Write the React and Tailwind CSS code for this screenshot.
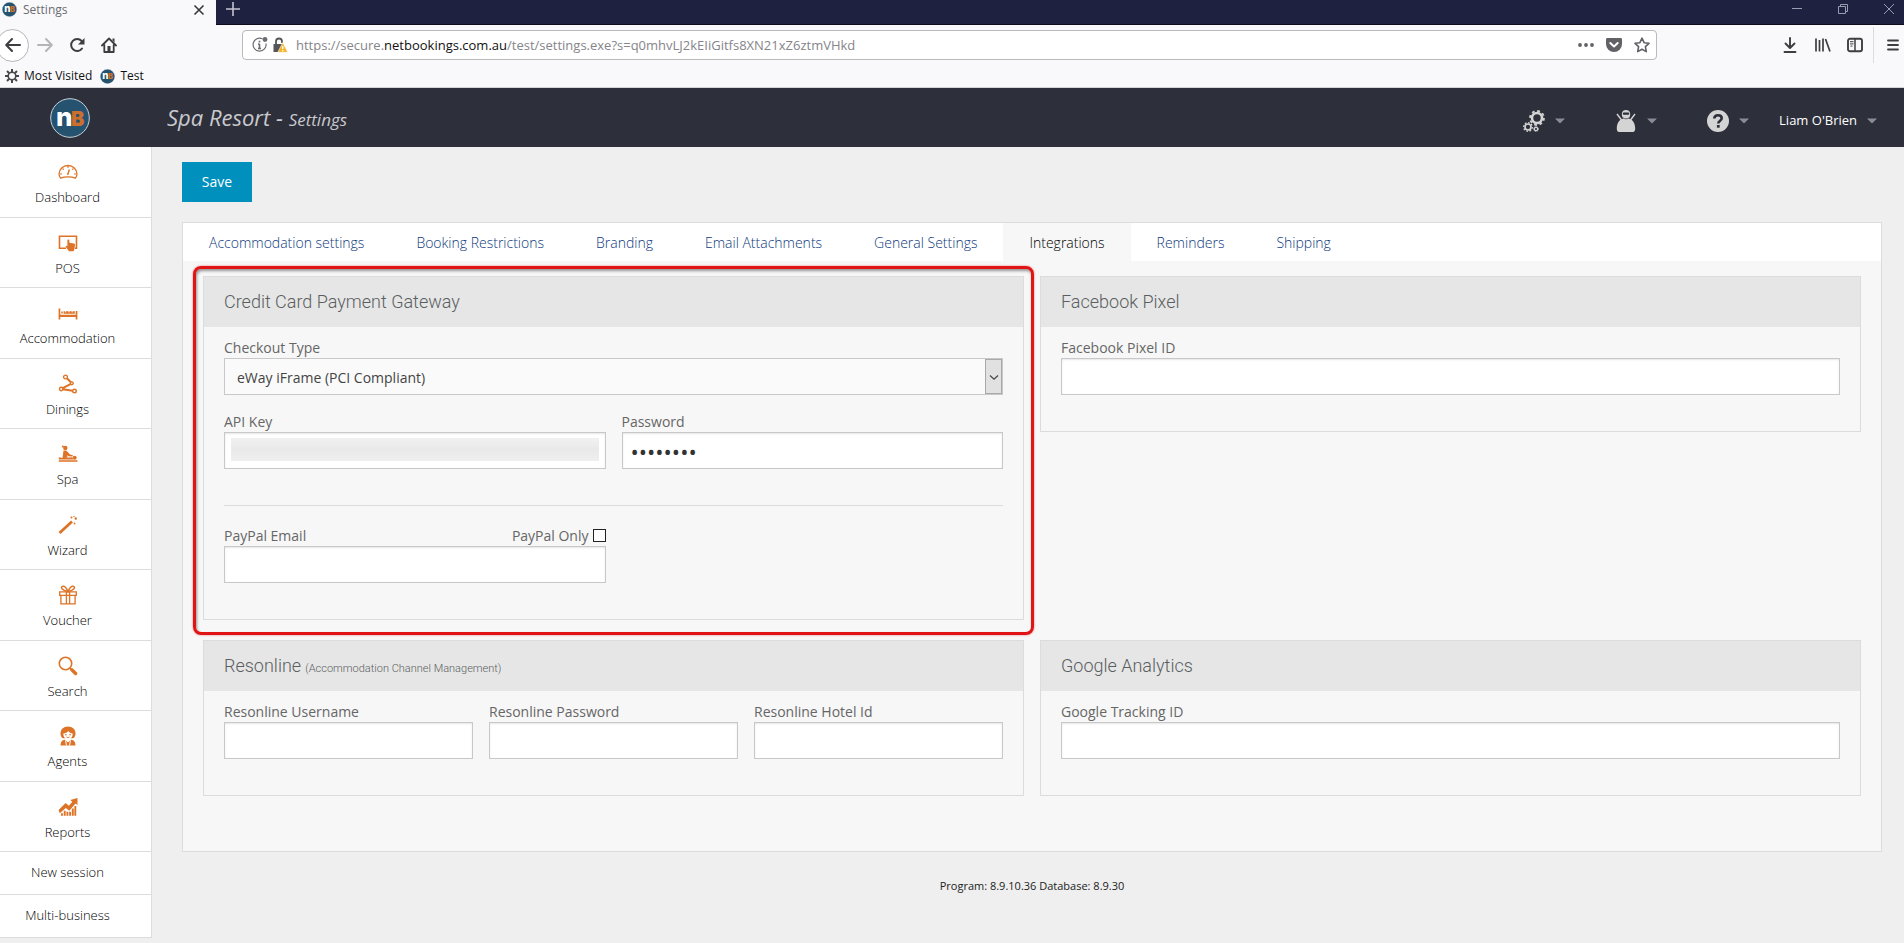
const TABS = [
  'Accommodation settings',
  'Booking Restrictions',
  'Branding',
  'Email Attachments',
  'General Settings',
  'Integrations',
  'Reminders',
  'Shipping',
];

function Svg({ children, size = 'size-5', box = '0 0 20 20', className = '' }) {
  return (
    <svg viewBox={box} fill="none" stroke="currentColor" className={`${size} shrink-0 ${className}`} aria-hidden="true">
      {children}
    </svg>
  );
}

function Logo({ size }) {
  return (
    <svg viewBox="0 0 40 40" className={`${size} shrink-0`} aria-hidden="true">
      <circle cx="20" cy="20" r="19.3" fill="#24526f" stroke="#c9d3da" strokeWidth="1" />
      <text x="6" y="27.500" fontSize="26" fontWeight="800" fontFamily="Inter, sans-serif" fill="#fff">n</text>
      <text x="21" y="27.500" fontSize="20" fontWeight="900" fontFamily="Inter, sans-serif" fill="#cc6f2c">B</text>
    </svg>
  );
}

/* Sidebar icons */
const DashboardIcon = () => (
  <Svg>
    <path strokeWidth="1.300" d="M2.600 16.200C1.500 14.800 1 13.400 1 12a9 8.500 0 0 1 18 0c0 1.400-.5 2.800-1.600 4.200-2.300-1-4.500-1.300-7.400-1.300s-5.100.3-7.400 1.300z" />
    <path strokeWidth="1.100" d="M10 4v2M4.500 6.500l1.300 1.200M15.500 6.500l-1.300 1.200M2 12h2M16 12h2" />
    <path strokeWidth="1.500" d="M9.600 13l1.700-5.500" />
  </Svg>
);

const PosIcon = () => (
  <Svg>
    <path strokeWidth="1.600" d="M8 15.300H1.500V3.300h17v12h-1.500" />
    <path fill="currentColor" stroke="none" d="M10.200 6.500c.9 0 1.200.6 1.200 1.300v2l4.500.8c.8.2 1.200.7 1.100 1.500l-.6 4.200-.8 2h-4.700l-3-4.300c-.5-.9.4-1.600 1.200-1l.3.200V7.800c0-.7.200-1.300.8-1.300z" />
  </Svg>
);

const BedIcon = () => (
  <Svg>
    <path fill="currentColor" stroke="none" d="M.6 5.500h1.700v6.200h15.400V8h1.700v8.500h-1.700V14H2.300v2.500H.6zM3.300 8.600h1.500v2H3.300zM5.600 8.300h11.200v2.400H5.600z" />
    <path stroke="#fff" strokeWidth=".8" d="M7.500 8v1.500M11 8v1.500M14.200 8v1.500" />
  </Svg>
);

const DiningIcon = () => (
  <Svg>
    <g strokeWidth="1.400">
      <circle cx="7.500" cy="3" r="1.900" />
      <circle cx="3.200" cy="15" r="1.700" />
      <circle cx="16.500" cy="17" r="1.800" />
      <circle cx="13.800" cy="9.300" r="1.400" />
      <path strokeWidth="2" d="M8.900 4.300l4 3.900M12.500 10.100l-7.800 4M5 15.300l9.600 1.500" />
    </g>
  </Svg>
);

const SpaIcon = () => (
  <Svg>
    <g fill="currentColor" stroke="none">
      <circle cx="7.300" cy="4" r="2.200" />
      <circle cx="4.900" cy="2.500" r="1" />
      <path d="M5.500 6.500l3 .2 3.500 3.800 3 .8-.6 1.300-4-.4L8.800 11l1 2.500-5.300.8z" />
      <circle cx="16.700" cy="13.700" r="2" />
      <path d="M.8 13.200l4 .9 9.500-.9 1.200 2.300H.8zM.8 16.200h18.700v1.600H.8z" />
    </g>
  </Svg>
);

const WandIcon = () => (
  <Svg>
    <path strokeWidth="2.800" d="M1.500 18L14 6.500" />
    <g fill="currentColor" stroke="none">
      <circle cx="13.500" cy="2.500" r="1" />
      <circle cx="17.800" cy="3.500" r="1.200" />
      <circle cx="16.500" cy="8.500" r=".9" />
      <circle cx="16" cy="1.400" r=".7" />
    </g>
  </Svg>
);

const GiftIcon = () => (
  <Svg>
    <path strokeWidth="1.300" d="M1.700 6.800h16.600v3.500H1.700zM2.900 10.300h14.200v8.500H2.900zM8.400 6.800v12M11.600 6.800v12" />
    <path strokeWidth="1.400" d="M10 6.600C8.500 3 6.500.8 4.500 1.400 2.300 2.200 3.500 5 10 6.600zM10 6.600c1.500-3.600 3.500-5.800 5.500-5.200 2.200.8 1 3.600-5.500 5.200z" />
  </Svg>
);

const SearchIcon = () => (
  <Svg>
    <circle cx="7.500" cy="7.500" r="6.200" strokeWidth="1.600" />
    <path strokeWidth="3.400" strokeLinecap="round" d="M13.800 13.800l3.800 3.700" />
    <path strokeWidth="1.500" d="M12 12l2 2" />
  </Svg>
);

const AgentIcon = () => (
  <Svg>
    <g fill="currentColor" stroke="none">
      <path d="M10 .5c4.600 0 7.500 3 7.500 7 0 2-.8 3.800-2.200 4.800H4.700C3.300 11.300 2.500 9.500 2.500 7.500c0-4 2.900-7 7.500-7z" />
      <path d="M2.500 19.500c0-3.500 1.300-5.500 4.500-5.800l3 2.800 3-2.800c3.200.3 4.500 2.300 4.500 5.800z" />
    </g>
    <path fill="#fff" stroke="none" d="M5.300 7.500c3-.2 4.200-1.300 5-2.500 1 1.500 2.400 2.300 4.400 2.500-.1 3.500-2 6-4.700 6s-4.600-2.500-4.700-6z" />
    <path strokeWidth="1" d="M7 8.800h1.800M11.200 8.800H13M8.500 11c1 .7 2 .7 3 0" />
    <path stroke="#fff" strokeWidth="1" d="M7.500 14.500l1 5M12.500 14.500l-1 5" />
  </Svg>
);

const ReportIcon = () => (
  <Svg>
    <path fill="currentColor" stroke="none" d="M.6 13l7-7 3.300 2.800 3.400-4-2-1.800L19.500 1v7l-2-1.500-6.200 7.200-3.500-2.800-6 5.300z" />
    <path strokeWidth="1.900" d="M4 18.800v-2.500M6.700 18.800v-5M9.400 18.800v-4M12.100 18.800v-4M14.800 18.800V11.500M17.300 18.800V9" />
  </Svg>
);

const MENU = [
  { label: 'Dashboard', Icon: DashboardIcon },
  { label: 'POS', Icon: PosIcon },
  { label: 'Accommodation', Icon: BedIcon },
  { label: 'Dinings', Icon: DiningIcon },
  { label: 'Spa', Icon: SpaIcon },
  { label: 'Wizard', Icon: WandIcon },
  { label: 'Voucher', Icon: GiftIcon },
  { label: 'Search', Icon: SearchIcon },
  { label: 'Agents', Icon: AgentIcon },
  { label: 'Reports', Icon: ReportIcon },
];

function TitleBar() {
  return (
    <div className="flex h-[25px] bg-[#1f2140]">
      <div className="flex w-[216px] items-center bg-[#f9f9fb] pr-[11px] pb-[6px] pl-[2px]">
        <Logo size="size-[15px]" />
        <span className="ml-[6px] flex-1 text-xs text-[#6b6b70]">Settings</span>
        <button aria-label="Close tab" className="text-[#38383d]">
          <Svg size="size-3" box="0 0 12 12">
            <path strokeWidth="1.600" d="M1.500 1.500l9 9M10.500 1.500l-9 9" />
          </Svg>
        </button>
      </div>
      <div className="flex flex-1 items-center justify-between border-b border-[#0c0c1c] pr-[10px] pb-[7px] pl-[10px]">
        <button aria-label="New tab" className="text-[#c4c4d0]">
          <Svg size="size-3.5" box="0 0 14 14">
            <path strokeWidth="1.600" d="M7 0v14M0 7h14" />
          </Svg>
        </button>
        <div className="flex items-center gap-9 text-[#9a9ab0]">
          <button aria-label="Minimize">
            <Svg size="size-2.5" box="0 0 10 10">
              <path d="M0 4.500h10" />
            </Svg>
          </button>
          <button aria-label="Restore">
            <Svg size="size-2.5" box="0 0 10 10">
              <path d="M.5 2.500h7v7h-7zM2.500 2.500v-2h7v7h-2" />
            </Svg>
          </button>
          <button aria-label="Close window">
            <Svg size="size-2.5" box="0 0 10 10">
              <path d="M0 0l10 10M10 0L0 10" />
            </Svg>
          </button>
        </div>
      </div>
    </div>
  );
}

function Toolbar() {
  return (
    <div className="flex h-10 items-center bg-[#f9f9fb] pr-[5px] text-[#3e3e42]">
      <button aria-label="Back" className="-ml-1 flex size-[33px] items-center justify-center rounded-full border border-[#b5b5ba] bg-white">
        <Svg size="size-4" box="0 0 16 16">
          <path strokeWidth="2" strokeLinecap="round" strokeLinejoin="round" d="M15 8H1.500M7 2L1.200 8 7 14" />
        </Svg>
      </button>
      <div className="ml-2 flex items-center gap-4">
        <button aria-label="Forward" className="text-[#b5b5b9]">
          <Svg size="size-4" box="0 0 16 16">
            <path strokeWidth="2" strokeLinecap="round" strokeLinejoin="round" d="M1 8h13.500M9 2l5.800 6L9 14" />
          </Svg>
        </button>
        <button aria-label="Reload">
          <Svg size="size-4" box="0 0 16 16">
            <path strokeWidth="2" strokeLinecap="round" d="M13 11.500A6 6 0 1 1 12.600 4" />
            <path fill="currentColor" stroke="none" d="M15.500 1v6.500H9z" />
          </Svg>
        </button>
        <button aria-label="Home">
          <Svg size="size-4" box="0 0 16 16">
            <path strokeWidth="1.800" strokeLinejoin="round" strokeLinecap="round" d="M1 8.500L8 1.500l7 7M3.300 8v7h9.400V8" />
            <path fill="currentColor" stroke="none" d="M6.500 9h3v6h-3zM11.500 1.500h2v4l-2-2z" />
          </Svg>
        </button>
      </div>

      <div className="ml-[125px] flex h-[30px] flex-1 items-center rounded-sm border border-[#b9b9be] bg-white pr-[6px] pl-[9px]">
        <Svg size="size-4" box="0 0 16 16" className="text-[#6c6c70]">
          <path strokeWidth="1.200" d="M10.500 1.800A6.500 6.500 0 1 0 14 6.500" />
          <path strokeWidth="1.600" d="M7.500 7v4.500M6 11.500h3M6 7h1.500M7.500 3.800v1.700" />
          <circle cx="13" cy="2.500" r="2.400" fill="currentColor" stroke="none" />
        </Svg>
        <Svg size="size-4" box="0 0 16 16" className="ml-1 text-[#55555a]">
          <path strokeWidth="1.800" d="M4 8V4.500a3 3 0 0 1 6 0V6" />
          <path fill="currentColor" stroke="none" d="M1.500 7h9v8h-9z" />
          <path fill="#f3b229" stroke="#fff" strokeWidth=".6" d="M10.800 5.500l5 9.800H5.800z" />
          <path stroke="#fff" strokeWidth="1.300" d="M10.800 9v3M10.800 13v1.300" />
        </Svg>
        <span className="ml-2 flex-1 pt-0.5 text-[13px] text-[#85858a]">
          https://secure.<span className="text-[#111]">netbookings.com.au</span>/test/settings.exe?s=q0mhvLJ2kEIiGitfs8XN21xZ6ztmVHkd
        </span>
        <div className="flex items-center gap-3 text-[#626266]">
          <button aria-label="Page actions">
            <Svg size="size-4" box="0 0 16 16">
              <g fill="currentColor" stroke="none">
                <circle cx="2" cy="8" r="1.900" />
                <circle cx="8" cy="8" r="1.900" />
                <circle cx="14" cy="8" r="1.900" />
              </g>
            </Svg>
          </button>
          <button aria-label="Save to Pocket">
            <Svg size="size-4" box="0 0 16 16">
              <path fill="currentColor" stroke="none" d="M1.500 1h13c1 0 1.500.5 1.500 1.500V7a8 8 0 0 1-16 0V2.500C0 1.500.5 1 1.500 1z" />
              <path stroke="#fff" strokeWidth="2" strokeLinecap="round" strokeLinejoin="round" d="M4.300 6L8 9.500 11.700 6" />
            </Svg>
          </button>
          <button aria-label="Bookmark this page">
            <Svg size="size-4" box="0 0 16 16">
              <path strokeWidth="1.600" strokeLinejoin="round" d="M8 1.200l2.100 4.500 4.900.6-3.600 3.400.9 4.900L8 12.200l-4.300 2.400.9-4.900L1 6.300l4.900-.6z" />
            </Svg>
          </button>
        </div>
      </div>

      <div className="ml-[126px] flex items-center gap-4">
        <button aria-label="Downloads">
          <Svg size="size-4" box="0 0 16 16">
            <path strokeWidth="1.900" strokeLinecap="round" strokeLinejoin="round" d="M7 1v9.500M2.500 6.500L7 11l4.500-4.500M1.500 15h11" />
          </Svg>
        </button>
        <button aria-label="Library">
          <Svg size="size-4" box="0 0 16 16">
            <path strokeWidth="1.700" d="M1 1.500v13M4.500 3v11.500M8 1.500v13M10.500 2l4.500 12.500" />
          </Svg>
        </button>
        <button aria-label="Sidebars">
          <Svg size="size-4" box="0 0 16 16">
            <rect x="1" y="1.800" width="14" height="12.400" rx="2" strokeWidth="1.900" />
            <path strokeWidth="1.500" d="M8 2v12" />
            <path strokeWidth="1" d="M3 4.700h3.500M3 6.900h3.500M3.500 9.100h2" />
          </Svg>
        </button>
      </div>
      <div className="mr-[13px] ml-[10px] h-9 w-px bg-[#dcdce0]" />
      <button aria-label="Menu">
        <Svg size="size-3" box="0 0 12 12">
          <path strokeWidth="1.800" strokeLinecap="round" d="M1 1.500h10M1 6h10M1 10.500h10" />
        </Svg>
      </button>
    </div>
  );
}

function Bookmarks() {
  return (
    <div className="flex h-[23px] items-center border-b border-[#d5d5d8] bg-[#f9f9fb] pl-[5px] text-xs text-[#111]">
      <a href="#most-visited" className="flex items-center gap-[5px]">
        <Svg size="size-3.5" box="0 0 14 14" className="text-[#48484c]">
          <circle cx="7" cy="7" r="3.800" strokeWidth="1.600" />
          <path strokeWidth="2" d="M7 0v3M7 11v3M0 7h3M11 7h3M2 2l2.200 2.200M9.800 9.800L12 12M12 2L9.800 4.200M4.200 9.800L2 12" />
        </Svg>
        Most Visited
      </a>
      <a href="#test" className="ml-2 flex items-center gap-[5px]">
        <Logo size="size-[15px]" />
        Test
      </a>
    </div>
  );
}

function Caret() {
  return (
    <svg viewBox="0 0 10 6" className="h-1.5 w-2.5" fill="#8a8b94" aria-hidden="true">
      <path d="M0 .5h10L5 5.500z" />
    </svg>
  );
}

function Header() {
  return (
    <header className="flex h-[59px] items-center bg-[#2d2f3a] pr-[27px] pl-[50px]">
      <Logo size="size-10" />
      <h1 className="ml-[77px] flex-1 text-[22px] font-normal text-[#c9c9ce] italic">
        Spa Resort - <span className="text-[17px]">Settings</span>
      </h1>
      <div className="flex items-center gap-[50px] pt-1.5 text-[#d4d4d4]">
        <button aria-label="Settings" className="flex items-center gap-2.5">
          <Svg size="size-[22px]" box="0 0 22 22">
            <circle cx="14" cy="8" r="5" strokeWidth="2.600" />
            <circle cx="14" cy="8" r="7" strokeWidth="1.800" strokeDasharray="2.800 2.700" />
            <circle cx="5" cy="17" r="3" strokeWidth="1.700" />
            <circle cx="5" cy="17" r="4.300" strokeWidth="1.300" strokeDasharray="1.700 1.600" />
            <circle cx="13" cy="19" r="1.700" strokeWidth="1.200" />
            <circle cx="13" cy="19" r="2.500" strokeWidth=".8" strokeDasharray="1.100 .9" />
          </Svg>
          <Caret />
        </button>
        <button aria-label="Agents" className="flex items-center gap-2.5">
          <Svg size="size-[22px]" box="0 0 22 22">
            <path fill="currentColor" stroke="none" d="M6.800 4C6.800 1.300 8.500 0 11 0s4.200 1.300 4.200 4c0 2-.7 3.500-1.700 4.500 4.500 1 6.700 5 6.700 10 0 2-.8 3.500-2.200 3.500H4c-1.400 0-2.200-1.500-2.200-3.500 0-5 2.200-9 6.700-10C7.500 7.500 6.800 6 6.800 4z" />
            <path strokeWidth="1.400" d="M2 4l4.500 6M20 4l-4.500 6" />
            <rect x="7.800" y="2.600" width="6.400" height="2.200" rx="1" fill="#2d2f3a" stroke="none" />
            <path stroke="#2d2f3a" strokeWidth=".7" d="M8 7.800c2 1.400 4 1.400 6 0" />
          </Svg>
          <Caret />
        </button>
        <button aria-label="Help" className="flex items-center gap-2.5">
          <Svg size="size-[22px]" box="0 0 22 22">
            <circle cx="11" cy="11" r="11" fill="currentColor" stroke="none" />
            <path stroke="#2d2f3a" strokeWidth="2.600" d="M7.300 8.500C7.400 6.200 9 5.200 11 5.200c2.200 0 3.700 1.100 3.700 3 0 2.500-3.400 2.500-3.400 5.300" />
            <path stroke="#2d2f3a" strokeWidth="2.800" d="M11.300 15v2.700" />
          </Svg>
          <Caret />
        </button>
      </div>
      <button className="ml-[30px] flex items-center gap-2.5 pt-1.5 text-[13px] text-white">
        Liam O'Brien
        <Caret />
      </button>
    </header>
  );
}

function Sidebar() {
  return (
    <nav className="w-[152px] shrink-0 self-start border-r border-[#dcdcdc] bg-white text-[13px] font-light text-black">
      {MENU.map(({ label, Icon }) => (
        <a
          key={label}
          href={`#${label.toLowerCase()}`}
          className="flex flex-col items-center border-b border-[#dcdcdc] pt-[15px] pr-4 odd:h-[71px] even:h-[70px]"
        >
          <span className="text-[#dd7326]">
            <Icon />
          </span>
          <span className="mt-[5px] leading-5">{label}</span>
        </a>
      ))}
      {['New session', 'Multi-business'].map((label) => (
        <a key={label} href="#session" className="flex h-[43px] items-center justify-center border-b border-[#dcdcdc] pr-4">
          {label}
        </a>
      ))}
    </nav>
  );
}

function Panel({ title, note, highlighted, children }) {
  return (
    <section className="relative border border-[#dcdcdc]">
      <h2 className="flex h-[50px] items-center bg-[#e6e6e6] px-5 font-[Roboto,sans-serif] text-lg font-light text-[#5a5e61]">
        <span>
          {title}
          {note && <small className="ml-1 text-[11px]">{note}</small>}
        </span>
      </h2>
      <div className="px-5 pt-[11px] pb-[19px]">{children}</div>
      {highlighted && (
        <div className="pointer-events-none absolute -inset-x-[11px] -top-[11px] -bottom-4 rounded-lg border-3 border-[#e01414] shadow-[0_0_2px_#e01414aa,inset_1px_2px_3px_#00000066]" />
      )}
    </section>
  );
}

const inputClass = 'block h-[37px] w-full border border-[#c8c8c8] bg-white px-2 text-[#333] shadow-[inset_0_1px_2px_#0000001a] outline-none';

function Field({ id, label, children }) {
  return (
    <div className="mb-[17px]">
      <label htmlFor={id} className="block leading-5">{label}</label>
      {children || <input id={id} type="text" className={inputClass} />}
    </div>
  );
}

function PaymentGateway() {
  return (
    <Panel title="Credit Card Payment Gateway" highlighted>
      <Field id="checkout" label="Checkout Type">
        <div className="relative">
          <select id="checkout" className="block h-[37px] w-full appearance-none border border-[#c8c8c8] bg-[#fafafa] px-3 pt-0.5 text-[#444]">
            <option>eWay iFrame (PCI Compliant)</option>
          </select>
          <span className="pointer-events-none absolute inset-y-px right-px flex w-[17px] items-center justify-center border border-[#a9a9a9] bg-[#e1e1e1] text-[#444]">
            <Svg size="size-2.5" box="0 0 10 10">
              <path strokeWidth="1.200" d="M1 3.500l4 3.700 4-3.700" />
            </Svg>
          </span>
        </div>
      </Field>
      <div className="grid grid-cols-2 gap-x-4">
        <Field id="api-key" label="API Key">
          <div className="relative">
            <input id="api-key" type="text" className={inputClass} />
            {/* redacted key */}
            <span className="pointer-events-none absolute inset-x-[7px] top-1.5 bottom-2 bg-linear-to-b from-[#f1f1f1] via-[#e9e9e9] to-[#efefef]" />
          </div>
        </Field>
        <Field id="password" label="Password">
          <input id="password" type="password" defaultValue="password" className={`${inputClass} text-[22px]`} />
        </Field>
      </div>
      <hr className="mt-[19px] mb-5 border-[#dcdcdc]" />
      <div className="grid grid-cols-2 gap-x-4">
        <div className="mb-[17px]">
          <div className="flex justify-between leading-5">
            <label htmlFor="paypal-email">PayPal Email</label>
            <label className="flex items-center gap-1">
              PayPal Only
              <input type="checkbox" className="mb-0.5 size-[13px] appearance-none border border-[#222] bg-white" />
            </label>
          </div>
          <input id="paypal-email" type="email" className={inputClass} />
        </div>
      </div>
    </Panel>
  );
}

function App() {
  return (
    <div className="min-h-screen bg-[#efefef] font-['Open_Sans',sans-serif]">
      <TitleBar />
      <Toolbar />
      <Bookmarks />
      <Header />
      <div className="flex">
        <Sidebar />
        <main className="flex-1 pt-[15px] pr-[22px] pl-[30px] text-sm text-[#666]">
          <button className="h-10 w-[70px] bg-[#0090be] text-white">Save</button>

          <div className="mt-5 border border-[#dcdcdc] bg-[#f7f7f7]">
            <div className="flex h-[38px] bg-white font-light">
              {TABS.map((tab) => (
                <a
                  key={tab}
                  href="#tab"
                  className={`flex items-center px-[26px] pt-0.5 ${
                    tab === 'Integrations' ? 'bg-[#f7f7f7] text-black' : 'text-[#0c387c]'
                  }`}
                >
                  {tab}
                </a>
              ))}
            </div>

            <div className="grid grid-cols-2 items-start gap-x-4 gap-y-5 px-5 pt-[15px] pb-[55px]">
              <PaymentGateway />
              <Panel title="Facebook Pixel">
                <Field id="fb-pixel" label="Facebook Pixel ID" />
              </Panel>
              <Panel title="Resonline" note="(Accommodation Channel Management)">
                <div className="grid grid-cols-3 gap-x-4">
                  <Field id="res-user" label="Resonline Username" />
                  <Field id="res-pass" label="Resonline Password" />
                  <Field id="res-hotel" label="Resonline Hotel Id" />
                </div>
              </Panel>
              <Panel title="Google Analytics">
                <Field id="ga-id" label="Google Tracking ID" />
              </Panel>
            </div>
          </div>

          <p className="mt-6 text-center text-[11px] leading-5 text-[#222]">Program: 8.9.10.36 Database: 8.9.30</p>
        </main>
      </div>
    </div>
  );
}

export default App;
